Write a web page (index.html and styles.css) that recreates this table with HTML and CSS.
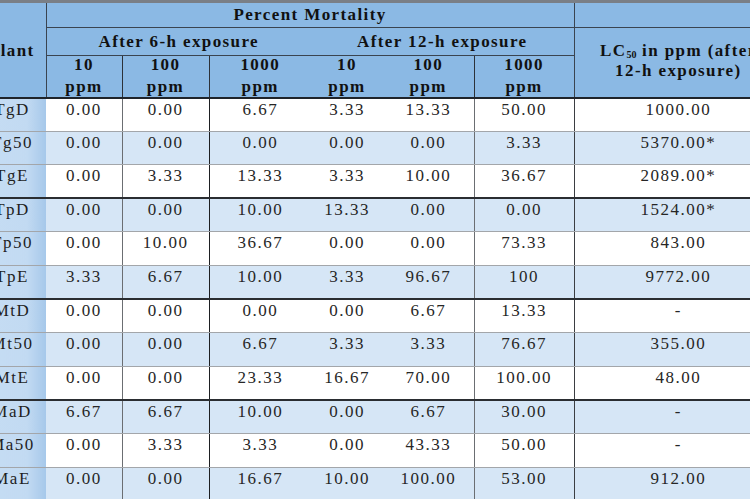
FILE: index.html
```html
<!DOCTYPE html>
<html lang="en">
<head>
<meta charset="utf-8">
<title>Percent Mortality</title>
<link rel="stylesheet" href="styles.css">
</head>
<body>
<div class="topband"></div>
<table class="mort">
  <colgroup>
    <col class="c-plant">
    <col class="c-a">
    <col class="c-b">
    <col class="c-c">
    <col class="c-d">
    <col class="c-e">
    <col class="c-f">
    <col class="c-lc">
  </colgroup>
  <thead>
    <tr class="h1">
      <th class="plant-h" rowspan="3">Plant</th>
      <th class="pm" colspan="6">Percent Mortality</th>
      <th class="lc-top"></th>
    </tr>
    <tr class="h2">
      <th class="after" colspan="3">After 6-h exposure</th>
      <th class="after" colspan="3">After 12-h exposure</th>
      <th class="lc-h" rowspan="2"><div class="lc-in">LC<sub>50</sub> in ppm (after<br>12-h exposure)</div></th>
    </tr>
    <tr class="h3">
      <th class="dose"><div class="dose-in">10<br>ppm</div></th>
      <th class="dose vl"><div class="dose-in">100<br>ppm</div></th>
      <th class="dose vl"><div class="dose-in">1000<br>ppm</div></th>
      <th class="dose"><div class="dose-in">10<br>ppm</div></th>
      <th class="dose"><div class="dose-in">100<br>ppm</div></th>
      <th class="dose vl"><div class="dose-in">1000<br>ppm</div></th>
    </tr>
  </thead>
  <tbody>
    <tr class="odd"><td class="plant">TgD</td><td>0.00</td><td class="l1">0.00</td><td class="l2">6.67</td><td>3.33</td><td>13.33</td><td class="l1">50.00</td><td class="l3">1000.00</td></tr>
    <tr class="even"><td class="plant">Tg50</td><td>0.00</td><td class="l1">0.00</td><td class="l2">0.00</td><td>0.00</td><td>0.00</td><td class="l1">3.33</td><td class="l3">5370.00*</td></tr>
    <tr class="odd grp"><td class="plant">TgE</td><td>0.00</td><td class="l1">3.33</td><td class="l2">13.33</td><td>3.33</td><td>10.00</td><td class="l1">36.67</td><td class="l3">2089.00*</td></tr>
    <tr class="even"><td class="plant">TpD</td><td>0.00</td><td class="l1">0.00</td><td class="l2">10.00</td><td>13.33</td><td>0.00</td><td class="l1">0.00</td><td class="l3">1524.00*</td></tr>
    <tr class="odd"><td class="plant">Tp50</td><td>0.00</td><td class="l1">10.00</td><td class="l2">36.67</td><td>0.00</td><td>0.00</td><td class="l1">73.33</td><td class="l3">843.00</td></tr>
    <tr class="even grp"><td class="plant">TpE</td><td>3.33</td><td class="l1">6.67</td><td class="l2">10.00</td><td>3.33</td><td>96.67</td><td class="l1">100</td><td class="l3">9772.00</td></tr>
    <tr class="odd"><td class="plant">MtD</td><td>0.00</td><td class="l1">0.00</td><td class="l2">0.00</td><td>0.00</td><td>6.67</td><td class="l1">13.33</td><td class="l3">-</td></tr>
    <tr class="even"><td class="plant">Mt50</td><td>0.00</td><td class="l1">0.00</td><td class="l2">6.67</td><td>3.33</td><td>3.33</td><td class="l1">76.67</td><td class="l3">355.00</td></tr>
    <tr class="odd grp"><td class="plant">MtE</td><td>0.00</td><td class="l1">0.00</td><td class="l2">23.33</td><td>16.67</td><td>70.00</td><td class="l1">100.00</td><td class="l3">48.00</td></tr>
    <tr class="even"><td class="plant">MaD</td><td>6.67</td><td class="l1">6.67</td><td class="l2">10.00</td><td>0.00</td><td>6.67</td><td class="l1">30.00</td><td class="l3">-</td></tr>
    <tr class="odd"><td class="plant">Ma50</td><td>0.00</td><td class="l1">3.33</td><td class="l2">3.33</td><td>0.00</td><td>43.33</td><td class="l1">50.00</td><td class="l3">-</td></tr>
    <tr class="even grp"><td class="plant">MaE</td><td>0.00</td><td class="l1">0.00</td><td class="l2">16.67</td><td>10.00</td><td>100.00</td><td class="l1">53.00</td><td class="l3">912.00</td></tr>
  </tbody>
</table>
</body>
</html>
```

FILE: styles.css
```css
html, body {
  margin: 0;
  padding: 0;
  background: #ffffff;
  overflow: hidden;
}

body {
  width: 750px;
  height: 499px;
  font-family: "Liberation Serif", "Times New Roman", serif;
  color: #1e1e1e;
}

.topband {
  height: 3px;
  background: #7a7f86;
}

.mort {
  border-collapse: collapse;
  table-layout: fixed;
  width: 804px;
  margin-left: -22px;
}

.c-plant { width: 68px; }
.c-a { width: 76px; }
.c-b { width: 87px; }
.c-c { width: 102px; }
.c-d { width: 72px; }
.c-e { width: 91px; }
.c-f { width: 100px; }
.c-lc { width: 208px; }

.mort th {
  background: #8bb9e4;
  color: #111111;
  font-weight: bold;
  font-size: 17px;
  letter-spacing: 1.4px;
  padding: 0;
  text-align: center;
  border: none;
  white-space: nowrap;
}

.h1 { height: 24px; }
.h2 { height: 28px; }
.h3 { height: 42px; }

.mort th.plant-h {
  border-right: 1px solid #3a4450;
  border-bottom: 2px solid #1f242a;
  vertical-align: middle;
  padding-top: 2px;
}

.mort th.pm {
  border-bottom: 1px solid #3a4450;
  line-height: 24px;
}

.mort th.lc-top {
  border-left: 1px solid #3a4450;
  border-bottom: 1px solid #3a4450;
}

.mort th.after {
  border-bottom: 1px solid #3a4450;
  line-height: 27px;
}

.mort th.lc-h {
  border-left: 1px solid #3a4450;
  border-bottom: 2px solid #1f242a;
  vertical-align: middle;
}

.lc-in {
  line-height: 20px;
  padding-bottom: 2px;
}

.lc-in sub {
  font-size: 10px;
  letter-spacing: 0;
  vertical-align: -2px;
  line-height: 0;
}

.mort th.dose {
  border-bottom: 2px solid #1f242a;
  vertical-align: top;
}

.mort th.vl {
  border-left: 1px solid #2c3138;
}

.dose-in {
  line-height: 22px;
  margin-top: -2px;
  height: 42px;
}

.mort td {
  height: 33.6px;
  padding: 1px 0 0;
  box-sizing: border-box;
  vertical-align: top;
  text-align: center;
  font-size: 17px;
  letter-spacing: 1.5px;
  line-height: 20px;
  color: #262626;
  border-bottom: 1px solid #a3a6aa;
  white-space: nowrap;
}

.mort tr.grp td {
  border-bottom: 2px solid #2a2d31;
}

.odd td { background: #ffffff; }
.even td { background: #d6e6f6; }

.mort td.plant {
  background: linear-gradient(to right, #c6ddf3 0%, #c2daf2 72%, #a6c8ea 100%);
  color: #1f1f1f;
}

.mort td.l1 { border-left: 1px solid #6b6e72; }
.mort td.l2 { border-left: 1px solid #1d1f22; }
.mort td.l3 { border-left: 1px solid #3b3e42; }
```
